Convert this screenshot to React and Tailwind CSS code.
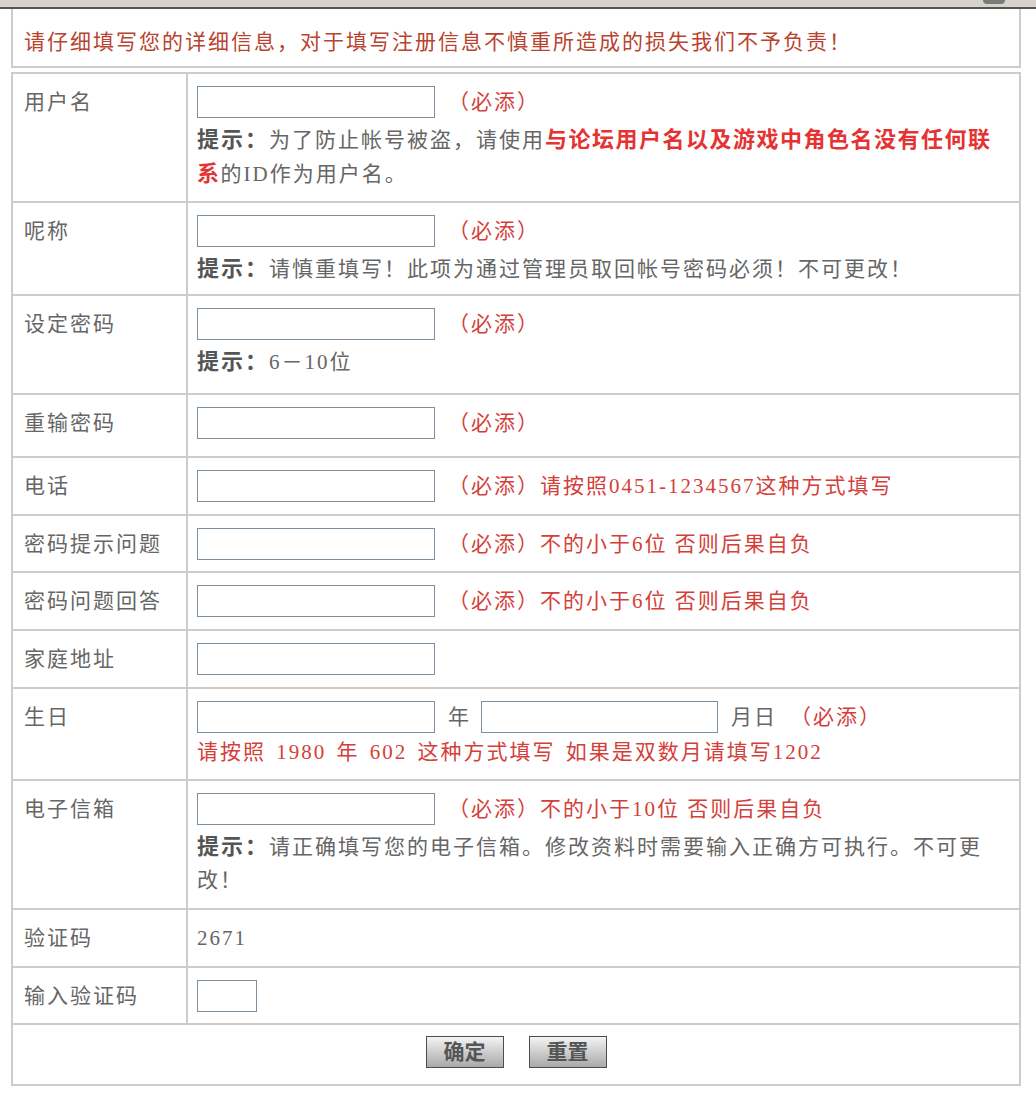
import React from "react";

function Field({ w = "w-[238px]" }) {
  return (
    <input
      type="text"
      className={`${w} h-[32px] border border-[#7b8fa0] bg-white outline-none`}
    />
  );
}

function Must({ children }) {
  return (
    <span className="ml-[13px] text-[#d43f3a] leading-[32px]">
      （必添）{children}
    </span>
  );
}

function Hint({ children }) {
  return (
    <p className="mt-[5px] leading-[33px] text-[#666]">
      <b className="text-[22px] text-[#555]">提示：</b>
      {children}
    </p>
  );
}

function Row({ label, h, children }) {
  return (
    <>
      <div className="bg-white pl-[11px] pt-[12px] leading-[32px] text-[#666]">
        {label}
      </div>
      <div className={`bg-white pl-[9px] pr-[15px] pt-[12px] ${h}`}>
        {children}
      </div>
    </>
  );
}

export default function App() {
  return (
    <div className="min-h-screen bg-white font-['Liberation_Serif','Noto_Sans_CJK_SC',serif] text-[21px] tracking-[2px]">
      <div className="relative h-[9px] border-b-2 border-[#555] bg-[#d6d3cc]">
        <div className="absolute left-[983px] top-0 h-[4px] w-[22px] rounded-b bg-[#7a7a7a]" />
      </div>

      <div className="ml-[11px] w-[1010px]">
        <div className="border-x-2 border-b-2 border-[#cccccc] pl-[11px] pt-[17px] pb-[8px] leading-[32px] text-[#b8432f]">
          请仔细填写您的详细信息，对于填写注册信息不慎重所造成的损失我们不予负责！
        </div>

        <div className="mt-[4px] grid grid-cols-[173px_831px] gap-[2px] bg-[#cccccc] p-[2px]">
          <Row label="用户名" h="min-h-[127px]">
            <div className="flex items-center">
              <Field />
              <Must />
            </div>
            <Hint>
              为了防止帐号被盗，请使用
              <b className="text-[22px] tracking-[1.5px] text-[#e53333]">
                与论坛用户名以及游戏中角色名没有任何联系
              </b>
              的ID作为用户名。
            </Hint>
          </Row>

          <Row label="呢称" h="min-h-[91px]">
            <div className="flex items-center">
              <Field />
              <Must />
            </div>
            <Hint>请慎重填写！此项为通过管理员取回帐号密码必须！不可更改！</Hint>
          </Row>

          <Row label="设定密码" h="min-h-[97px]">
            <div className="flex items-center">
              <Field />
              <Must />
            </div>
            <Hint>6－10位</Hint>
          </Row>

          <Row label="重输密码" h="min-h-[61px]">
            <div className="flex items-center">
              <Field />
              <Must />
            </div>
          </Row>

          <Row label="电话" h="min-h-[56px]">
            <div className="flex items-center">
              <Field />
              <Must>请按照0451-1234567这种方式填写</Must>
            </div>
          </Row>

          <Row label="密码提示问题" h="min-h-[55px]">
            <div className="flex items-center">
              <Field />
              <Must>不的小于6位 否则后果自负</Must>
            </div>
          </Row>

          <Row label="密码问题回答" h="min-h-[56px]">
            <div className="flex items-center">
              <Field />
              <Must>不的小于6位 否则后果自负</Must>
            </div>
          </Row>

          <Row label="家庭地址" h="min-h-[56px]">
            <div className="flex items-center">
              <Field />
            </div>
          </Row>

          <Row label="生日" h="min-h-[90px]">
            <div className="flex items-center text-[#666]">
              <Field />
              <span className="ml-[13px] mr-[10px] leading-[32px]">年</span>
              <Field w="w-[237px]" />
              <span className="ml-[13px] leading-[32px]">月日</span>
              <Must />
            </div>
            <p className="mt-[3px] leading-[33px] text-[#d43f3a] [word-spacing:3px]">
              请按照 1980 年 602 这种方式填写 如果是双数月请填写1202
            </p>
          </Row>

          <Row label="电子信箱" h="min-h-[127px]">
            <div className="flex items-center">
              <Field />
              <Must>不的小于10位 否则后果自负</Must>
            </div>
            <Hint>请正确填写您的电子信箱。修改资料时需要输入正确方可执行。不可更改！</Hint>
          </Row>

          <Row label="验证码" h="min-h-[56px]">
            <p className="leading-[32px] text-[#666]">2671</p>
          </Row>

          <Row label="输入验证码" h="min-h-[55px]">
            <div className="flex items-center">
              <Field w="w-[60px]" />
            </div>
          </Row>

          <div className="col-span-2 flex min-h-[59px] justify-center gap-[25px] bg-white pt-[11px]">
            <button className="h-[32px] w-[78px] border border-[#4d4d4d] bg-gradient-to-b from-[#f4f4f4] to-[#a9a9a9] text-[21px] font-bold tracking-normal text-[#555]">
              确定
            </button>
            <button className="h-[32px] w-[78px] border border-[#4d4d4d] bg-gradient-to-b from-[#f4f4f4] to-[#a9a9a9] text-[21px] font-bold tracking-normal text-[#555]">
              重置
            </button>
          </div>
        </div>
      </div>
    </div>
  );
}
